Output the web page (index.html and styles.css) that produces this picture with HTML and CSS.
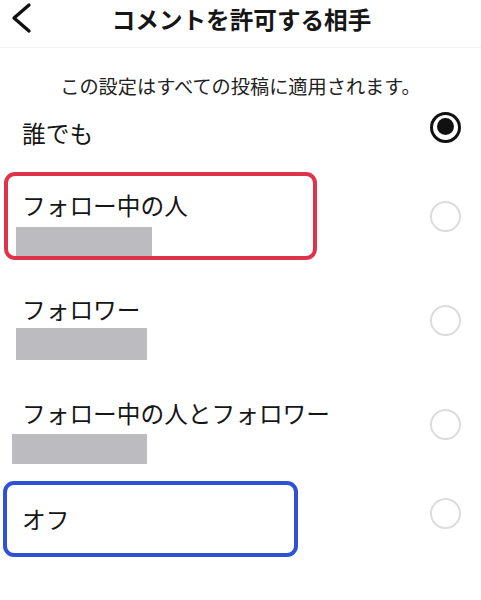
FILE: index.html
```html
<!doctype html>
<html lang="ja">
<head>
  <meta charset="UTF-8">
  <title>コメントを許可する相手</title>
  <link rel="stylesheet" href="styles.css">
</head>
<body>
  <header class="topbar">
    <a class="back" href="#">
      <svg width="40" height="40" viewBox="0 0 40 40"><polyline points="28,5 13,18 28,31" fill="none" stroke="#111" stroke-width="3.4" stroke-linecap="round" stroke-linejoin="round"/></svg>
    </a>
    <h1 class="title">コメントを許可する相手</h1>
  </header>

  <p class="note">この設定はすべての投稿に適用されます。</p>

  <ul class="options">
    <li class="option first">
      <div class="info">
        <div class="label">誰でも</div>
      </div>
      <span class="radio on"></span>
    </li>
    <li class="option">
      <div class="info mark-red">
        <div class="label">フォロー中の人</div>
        <div class="bar"></div>
      </div>
      <span class="radio"></span>
    </li>
    <li class="option">
      <div class="info">
        <div class="label">フォロワー</div>
        <div class="bar tall"></div>
      </div>
      <span class="radio"></span>
    </li>
    <li class="option">
      <div class="info">
        <div class="label">フォロー中の人とフォロワー</div>
        <div class="bar wide"></div>
      </div>
      <span class="radio"></span>
    </li>
    <li class="option last">
      <div class="info mark-blue">
        <div class="label">オフ</div>
      </div>
      <span class="radio"></span>
    </li>
  </ul>
</body>
</html>
```

FILE: styles.css
```css
* {box-sizing: border-box;}
body {margin: 0; background: #fff; color: #161616; font-family: "Noto Sans CJK JP", "Noto Sans", sans-serif;}
ul {list-style: none; margin: 0; padding: 0;}

.topbar {height: 48px; display: flex; align-items: center; justify-content: center; position: relative; border-bottom: 1px solid #f1f1f1;}
.back {position: absolute; left: 1px; top: 0; width: 40px; height: 40px; display: block;}
.back svg {display: block;}
.title {margin: 0 0 10px 2px; font-size: 23.6px; font-weight: 700; line-height: 28px; letter-spacing: 0;}

.note {margin: 26px 0 0 0; text-align: center; font-size: 19.2px; line-height: 24px; color: #222;}

.options {display: flex; flex-direction: column; gap: 16px; margin-top: 2px; padding-right: 20px;}
.option {display: flex; align-items: center; justify-content: space-between;}

.info {margin-left: 4px; width: 313px; border: 4px solid transparent; border-radius: 11px; padding: 15px 14px 0 14px;}
.first .info {padding-bottom: 5px;}
.label {font-size: 23.7px; line-height: 28px; white-space: nowrap;}
.bar {width: 136px; height: 29px; margin: 8px 0 0 -6px; background: #bcbbc0;}
.bar.tall {width: 131px; height: 32px; margin-top: 5px;}
.bar.wide {width: 135px; height: 30px; margin-left: -10px; margin-top: 7px;}

.mark-red {border-color: #de3348;}
.mark-blue {border-color: #2f51d9; width: 295px; margin-left: 3px; padding: 20px 14px 20px 15px;}
.last {margin-top: -3px;}
.last .radio {margin-bottom: 12px;}

.radio {width: 31px; height: 31px; border-radius: 50%; border: 2px solid #dcdcdc; flex: none; position: relative;}
.radio.on {border: 3.3px solid #111; margin-top: -2px;}
.radio.on::after {content: ""; position: absolute; left: 3.5px; top: 3.5px; width: 17px; height: 17px; border-radius: 50%; background: #111;}
```
